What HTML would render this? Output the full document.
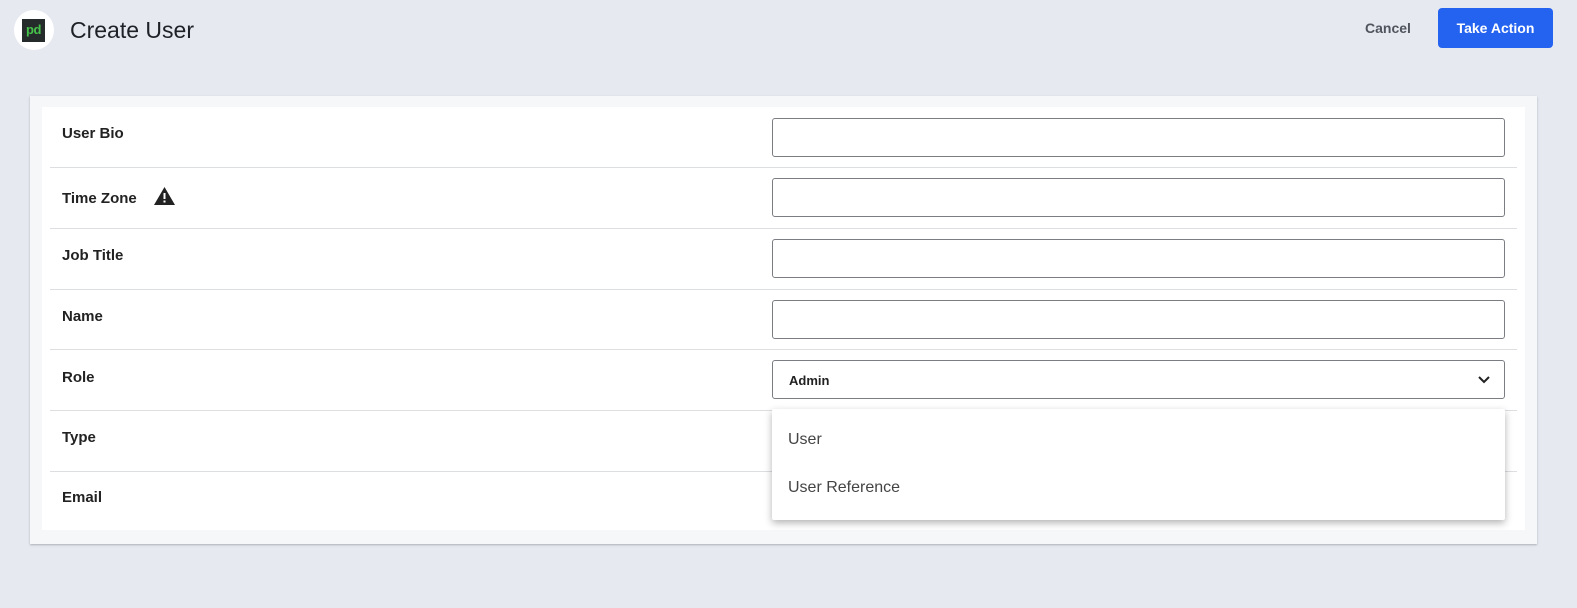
<!DOCTYPE html>
<html><head><style>
*{box-sizing:border-box;margin:0;padding:0}
body{width:1577px;height:608px;background:#e6e9f0;font-family:"Liberation Sans",Arial,sans-serif;position:relative;overflow:hidden}
.logo{position:absolute;left:14px;top:10px;width:40px;height:40px;border-radius:50%;background:#fff}
.logo div{position:absolute;left:8px;top:9px;width:23px;height:23px;background:#252a2b;color:#46c24a;font-weight:bold;font-size:13px;text-align:center;line-height:22px;letter-spacing:-0.5px}
.title{position:absolute;left:70px;top:17px;font-size:23px;color:#1e2126}
.cancel{position:absolute;left:1365px;top:20px;font-size:14px;font-weight:bold;color:#50545c}
.btn{position:absolute;left:1438px;top:8px;width:115px;height:40px;border-radius:4px;background:#2463f0;color:#fff;font-weight:bold;font-size:14px;text-align:center;line-height:40px}
.card{position:absolute;left:30px;top:96px;width:1507px;height:448px;background:#f5f7f9;box-shadow:0 1px 2px rgba(0,0,0,.25)}
.inner{position:absolute;left:42px;top:107px;width:1483px;height:423px;background:#fff}
.sep{position:absolute;left:50px;width:1467px;height:1px;background:#dcdee2}
.lbl{position:absolute;left:62px;font-size:15px;font-weight:bold;color:#222}
.inp{position:absolute;left:772px;width:733px;height:39px;border:1px solid #7a7d82;border-radius:3px;background:#fff}
.menu{position:absolute;left:772px;top:409px;width:733px;height:111px;background:#fff;box-shadow:0 3px 8px rgba(0,0,0,.3);border-radius:2px}
.menu div{position:absolute;left:16px;font-size:16px;color:#444}
</style></head><body>
<div class="logo"><div>pd</div></div>
<div class="title">Create User</div>
<div class="cancel">Cancel</div>
<div class="btn">Take Action</div>
<div class="card"></div>
<div class="inner"></div>
<div class="sep" style="top:167px"></div>
<div class="sep" style="top:228px"></div>
<div class="sep" style="top:289px"></div>
<div class="sep" style="top:349px"></div>
<div class="sep" style="top:410px"></div>
<div class="sep" style="top:471px"></div>
<div class="lbl" style="top:125px">User Bio</div>
<div class="lbl" style="top:186px">Time Zone <svg width="23" height="20" viewBox="0 0 23 20" style="vertical-align:-3px;margin-left:12px"><path d="M11.5 1L22 19H1Z" fill="#222"/><rect x="10.5" y="7" width="2" height="6" fill="#fff"/><rect x="10.5" y="14.5" width="2" height="2" fill="#fff"/></svg></div>
<div class="lbl" style="top:247px">Job Title</div>
<div class="lbl" style="top:308px">Name</div>
<div class="lbl" style="top:369px">Role</div>
<div class="lbl" style="top:429px">Type</div>
<div class="lbl" style="top:489px">Email</div>
<div class="inp" style="top:118px"></div>
<div class="inp" style="top:178px"></div>
<div class="inp" style="top:239px"></div>
<div class="inp" style="top:300px"></div>
<div class="inp" style="top:360px"><span style="position:absolute;left:16px;top:12px;font-size:13px;font-weight:bold;color:#222">Admin</span>
<svg width="14" height="10" viewBox="0 0 14 10" style="position:absolute;right:13px;top:14px"><path d="M2 2L7 7L12 2" stroke="#222" stroke-width="2" fill="none"/></svg></div>
<div class="menu"><div style="top:22px">User</div><div style="top:70px">User Reference</div></div>
</body></html>
